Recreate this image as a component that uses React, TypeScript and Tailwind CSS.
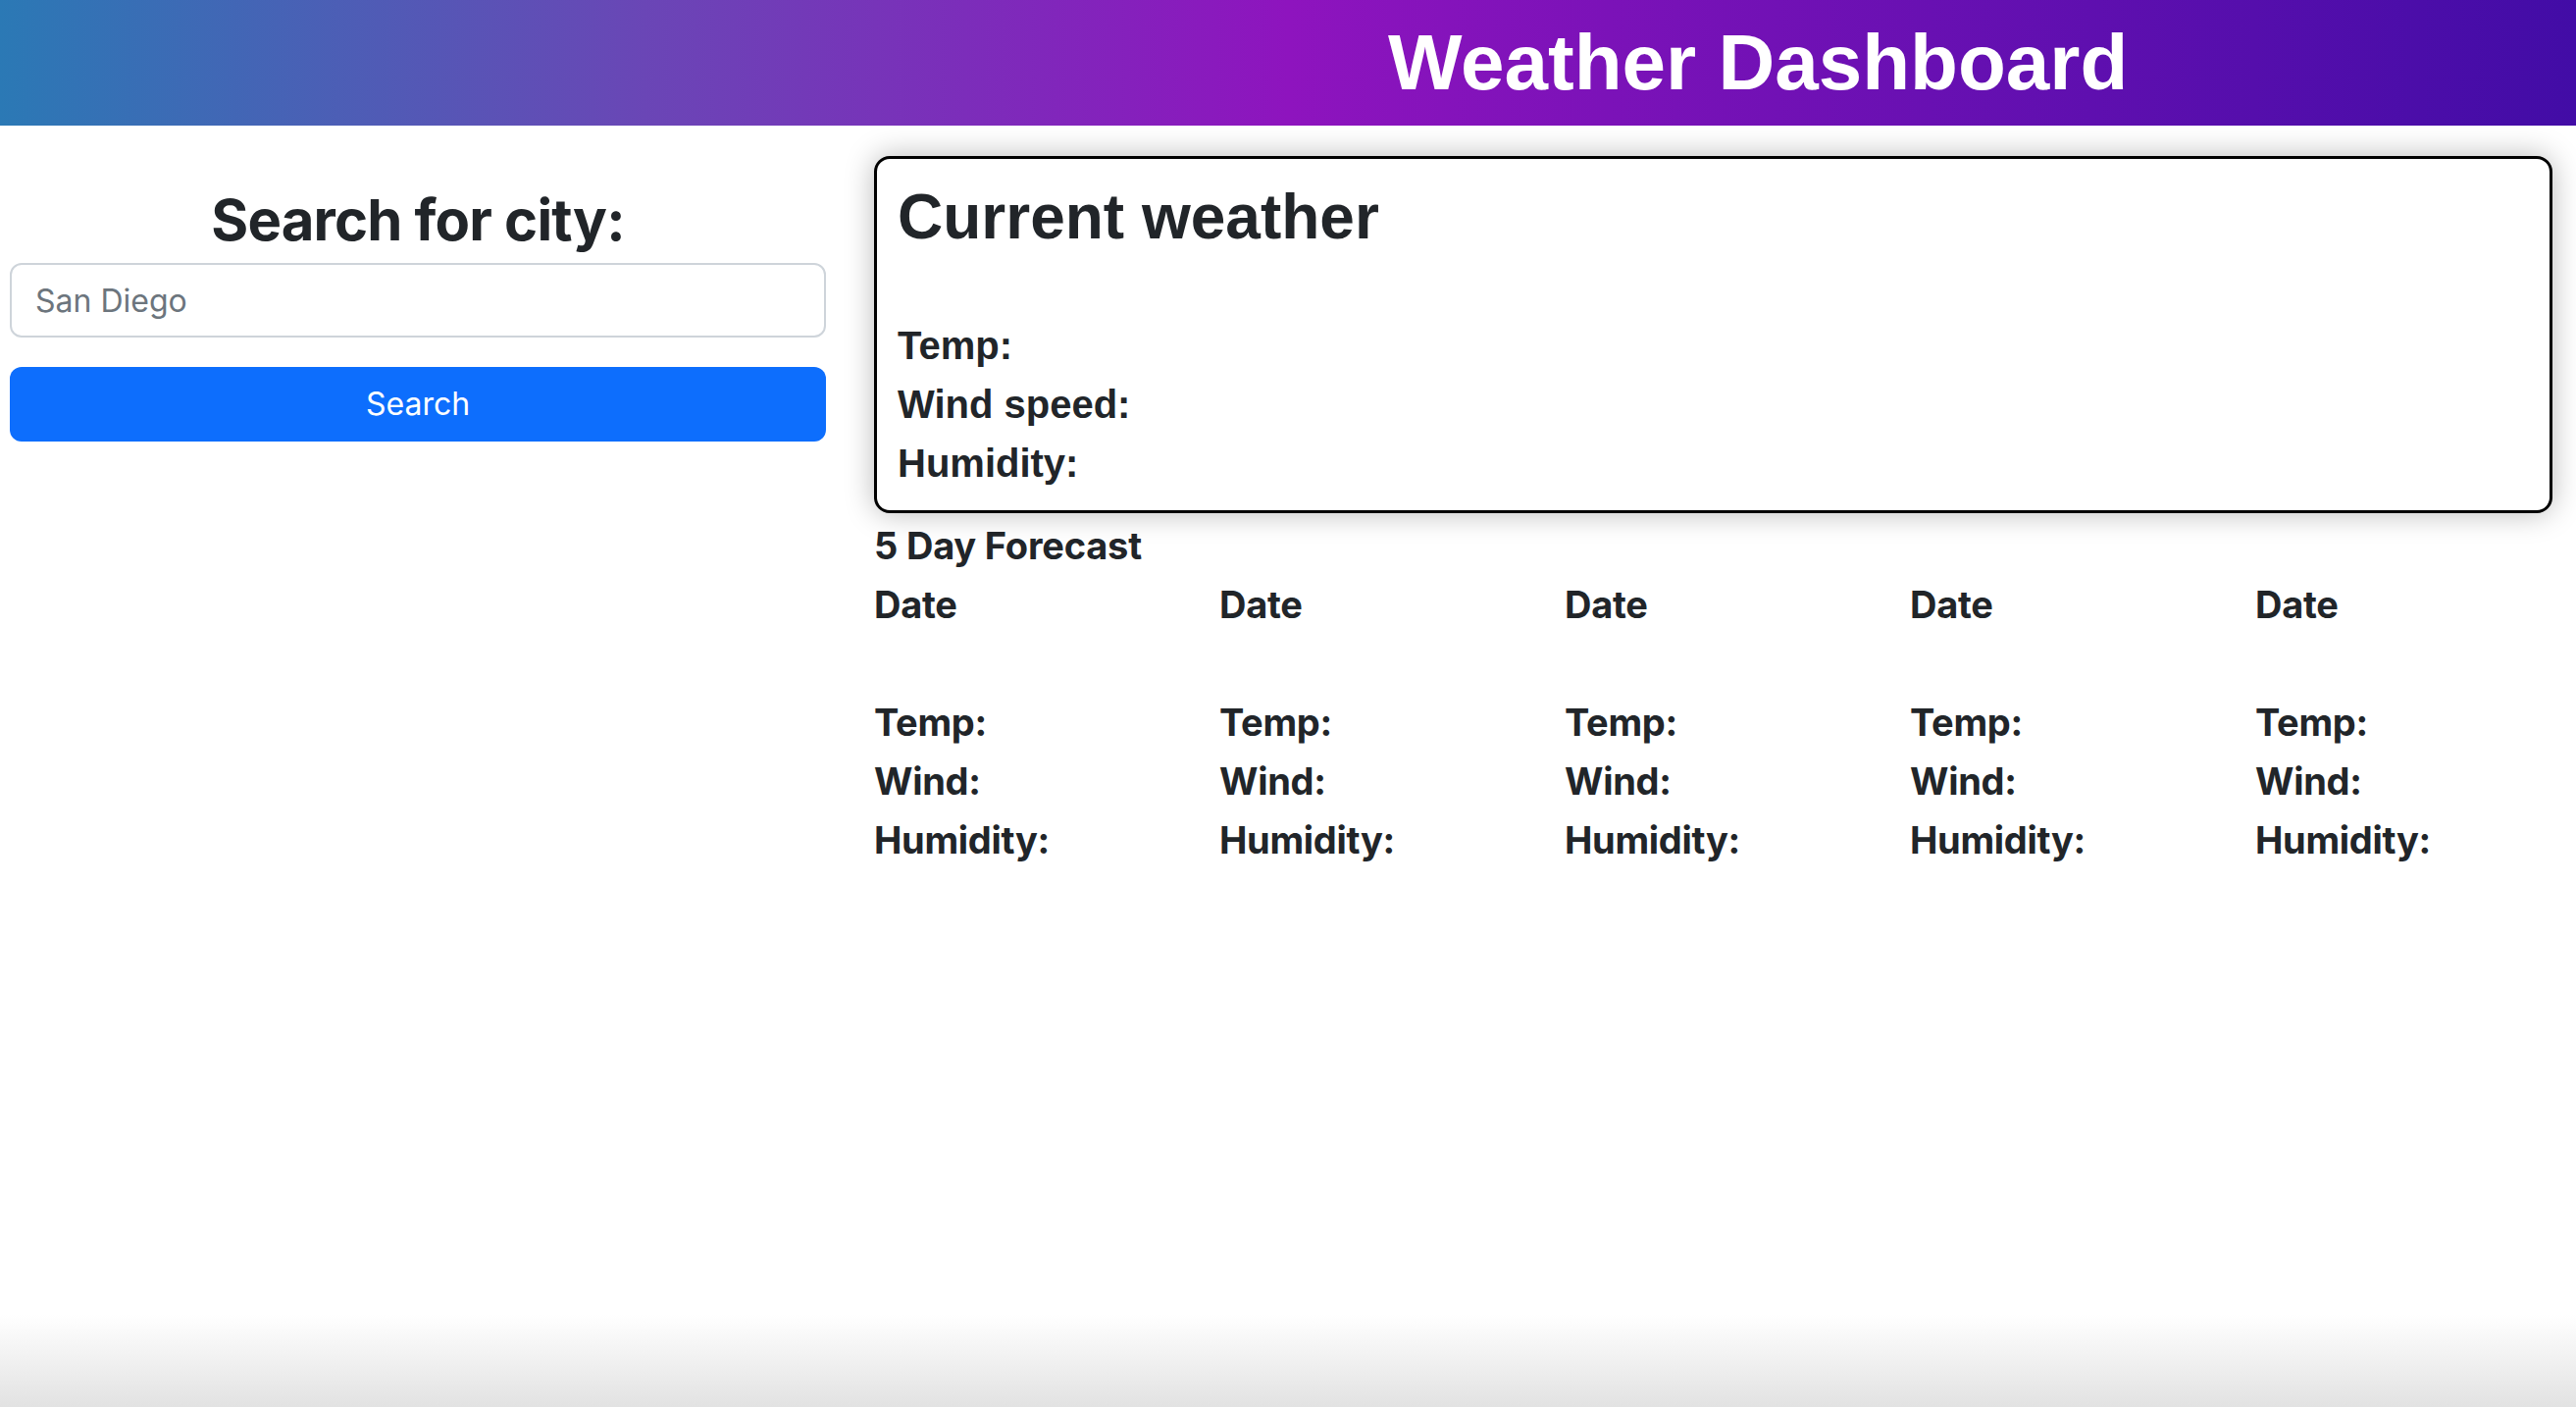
import React, { useState } from 'react';

const sans = "font-['Inter','Noto_Sans',sans-serif]";
const arial = "font-['Liberation_Sans','Arial',sans-serif]";

const days = [1, 2, 3, 4, 5];

const ForecastDay: React.FC = () => (
    <div className={`w-[352px] shrink-0 flex flex-col gap-[12px] text-[38px] leading-[48px] font-bold tracking-[-0.3px] text-[#212529] ${sans}`}>
        <div className="h-[48px]">Date</div>
        <div className="h-[48px]"></div>
        <div className="h-[48px]">Temp:</div>
        <div className="h-[48px]">Wind:</div>
        <div className="h-[48px]">Humidity:</div>
    </div>
);

const App: React.FC = () => {
    const [city, setCity] = useState('');

    return (
        <div className="min-h-screen flex flex-col bg-white text-[#212529] overflow-hidden">
            <header className="h-[128px] flex items-center bg-[linear-gradient(to_right,#2b79b5,#6a46b6_25%,#8e14be_50%,#420ca6)]">
                <h1 className={`ml-[1415px] text-[80px] leading-[96px] font-bold text-white ${arial}`}>Weather Dashboard</h1>
            </header>

            <main className="flex-1 flex items-start pl-[10px]">
                <div className="w-[832px] pt-[58px] flex flex-col">
                    <h2 className={`text-center text-[58px] leading-[77px] font-bold tracking-[-0.8px] mb-[5px] ${sans}`}>Search for city:</h2>
                    <input
                        value={city}
                        onChange={e => setCity(e.target.value)}
                        placeholder="San Diego"
                        className={`h-[76px] w-full px-[24px] text-[32px] border-2 border-[#ced4da] rounded-[12px] placeholder:text-[#6c757d] outline-none ${sans}`}
                    />
                    <button className={`mt-[30px] h-[76px] w-full rounded-[12px] bg-[#0d6efd] text-white text-[32px] ${sans}`}>Search</button>
                </div>

                <div className="ml-[49px] w-[1711px] shrink-0 mt-[31px] flex flex-col">
                    <div className={`border-[3px] border-black rounded-[16px] bg-white shadow-[0_0_30px_rgba(0,0,0,0.28)] pt-[21px] pb-[24px] px-[21px] ${arial}`}>
                        <h2 className="text-[64px] leading-[77px] font-bold">Current weather</h2>
                        <div className="mt-[68px] flex flex-col gap-[12px] text-[40px] leading-[48px] font-bold">
                            <div>Temp:</div>
                            <div>Wind speed:</div>
                            <div>Humidity:</div>
                        </div>
                    </div>

                    <h3 className={`mt-[9px] text-[38px] leading-[48px] font-bold tracking-[-0.2px] ${sans}`}>5 Day Forecast</h3>
                    <div className="mt-[12px] flex">
                        {days.map(d => <ForecastDay key={d} />)}
                    </div>
                </div>
            </main>

            <div className="h-[94px] bg-linear-to-b from-white to-[#e2e2e2]"></div>
        </div>
    );
};

export default App;
